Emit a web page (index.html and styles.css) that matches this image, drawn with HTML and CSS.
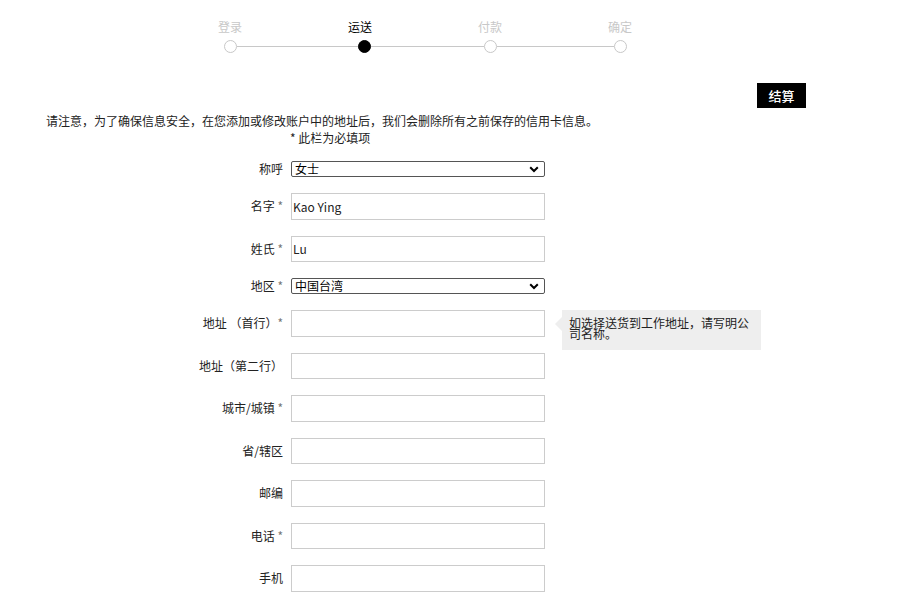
FILE: index.html
```html
<!DOCTYPE html>
<html lang="zh">
<head>
<meta charset="utf-8">
<title>运送</title>
<link rel="stylesheet" href="styles.css">
</head>
<body>
<div class="steps">
  <div class="step-labels">
    <span class="step-label">登录</span>
    <span class="step-label active">运送</span>
    <span class="step-label">付款</span>
    <span class="step-label">确定</span>
  </div>
  <div class="step-track">
    <span class="dot"></span><span class="seg seg-1"></span>
    <span class="dot filled"></span><span class="seg seg-2"></span>
    <span class="dot"></span><span class="seg seg-3"></span>
    <span class="dot"></span>
  </div>
</div>

<div class="actions">
  <button class="checkout" type="button">结算</button>
</div>

<p class="notice">请注意，为了确保信息安全，在您添加或修改账户中的地址后，我们会删除所有之前保存的信用卡信息。</p>
<p class="required-note">* 此栏为必填项</p>

<form class="address-form">
  <label class="field-label">称呼</label>
  <span class="select-wrap">
    <select class="field-select"><option>女士</option><option>先生</option></select>
    <svg class="chev" width="10" height="7" viewBox="0 0 10 7"><path d="M1.2 1.2 L5 5 L8.8 1.2" fill="none" stroke="#000" stroke-width="2"/></svg>
  </span>
  <span class="aside"></span>

  <label class="field-label">名字 <span class="star">*</span></label>
  <input class="field-input" type="text" value="Kao Ying">
  <span class="aside"></span>

  <label class="field-label">姓氏 <span class="star">*</span></label>
  <input class="field-input" type="text" value="Lu">
  <span class="aside"></span>

  <label class="field-label">地区 <span class="star">*</span></label>
  <span class="select-wrap">
    <select class="field-select"><option>中国台湾</option></select>
    <svg class="chev" width="10" height="7" viewBox="0 0 10 7"><path d="M1.2 1.2 L5 5 L8.8 1.2" fill="none" stroke="#000" stroke-width="2"/></svg>
  </span>
  <span class="aside"></span>

  <label class="field-label">地址 （首行）<span class="star">*</span></label>
  <input class="field-input" type="text">
  <span class="aside"><span class="tip">如选择送货到工作地址，请写明公司名称。</span></span>

  <label class="field-label">地址（第二行）</label>
  <input class="field-input" type="text">
  <span class="aside"></span>

  <label class="field-label">城市/城镇 <span class="star">*</span></label>
  <input class="field-input" type="text">
  <span class="aside"></span>

  <label class="field-label">省/辖区</label>
  <input class="field-input" type="text">
  <span class="aside"></span>

  <label class="field-label">邮编</label>
  <input class="field-input" type="text">
  <span class="aside"></span>

  <label class="field-label">电话 <span class="star">*</span></label>
  <input class="field-input" type="text">
  <span class="aside"></span>

  <label class="field-label">手机</label>
  <input class="field-input" type="text">
  <span class="aside"></span>
</form>
</body>
</html>
```

FILE: styles.css
```css
html, body {
  margin: 0;
  padding: 0;
  background: #fff;
}

body {
  font-family: "Noto Sans CJK SC", "Noto Sans", sans-serif;
  font-size: 12px;
  color: #222;
}

.steps {
  margin-left: 165px;
  width: 520px;
  padding-top: 19px;
}

.step-labels {
  display: grid;
  grid-template-columns: repeat(4, 130px);
  line-height: 16px;
  font-size: 12px;
}

.step-label {
  text-align: center;
  color: #c8c8c8;
}

.step-label.active {
  color: #000;
}

.step-track {
  display: flex;
  align-items: center;
  margin-top: 5px;
  padding-left: 58.5px;
}

.dot {
  width: 13px;
  height: 13px;
  box-sizing: border-box;
  border: 1px solid #c8c8c8;
  border-radius: 50%;
  background: #fff;
  flex: none;
}

.dot.filled {
  background: #000;
  border-color: #000;
}

.seg {
  height: 1px;
  background: #c8c8c8;
  flex: none;
}

.seg-1 { width: 121px; }
.seg-2 { width: 113px; }
.seg-3 { width: 117px; }

.actions {
  display: flex;
  justify-content: flex-end;
  padding-right: 107px;
  margin-top: 30px;
}

.checkout {
  width: 49px;
  height: 25px;
  border: 0;
  border-radius: 0;
  background: #000;
  color: #fff;
  font-family: inherit;
  font-size: 13px;
  font-weight: 500;
  padding: 0;
}

.notice {
  margin: 5px 0 0;
  padding-left: 46px;
  line-height: 16px;
  color: #222;
}

.required-note {
  margin: 1px 0 0;
  padding-left: 290px;
  line-height: 16px;
  color: #222;
}

.address-form {
  display: grid;
  grid-template-columns: 283px 254px 199px;
  column-gap: 8px;
  row-gap: 16px;
  align-items: center;
  margin-top: 15px;
}

.address-form > .aside {
  margin-left: 9px;
  align-self: start;
  position: relative;
}

.field-label {
  text-align: right;
  white-space: nowrap;
  line-height: 16px;
  color: #222;
}

.star {
  color: #777;
}

.select-wrap {
  position: relative;
  display: block;
  width: 254px;
  height: 16px;
}

.field-select {
  appearance: none;
  -webkit-appearance: none;
  display: block;
  width: 254px;
  height: 16px;
  box-sizing: border-box;
  margin: 0;
  padding: 0 16px 0 3px;
  border: 1px solid #555;
  border-radius: 2px;
  background: #fff;
  font-family: inherit;
  font-size: 12px;
  line-height: 14px;
  color: #000;
  overflow: hidden;
}

.chev {
  position: absolute;
  right: 6px;
  top: 4.5px;
  pointer-events: none;
}

.field-input {
  height: 26.5px;
  box-sizing: border-box;
  margin: 0;
  padding: 0 1px;
  border: 1px solid #ccc;
  border-radius: 0;
  font-family: inherit;
  font-size: 12px;
  color: #222;
  width: 254px;
  outline: none;
}

.tip {
  position: absolute;
  left: 0;
  top: 0;
  width: 199px;
  height: 40px;
  box-sizing: border-box;
  padding: 7px 12px 0 7px;
  background: #eee;
  color: #222;
  font-size: 12px;
  line-height: 11px;
}

.tip::before {
  content: "";
  position: absolute;
  left: -7px;
  top: 7px;
  border-style: solid;
  border-width: 7px 7px 7px 0;
  border-color: transparent #eee transparent transparent;
}
```
